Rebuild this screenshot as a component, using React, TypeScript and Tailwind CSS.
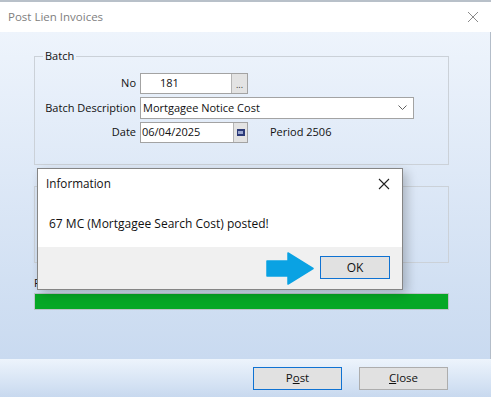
import React from 'react';

const Field = ({ children, className = '' }: { children: React.ReactNode; className?: string }) => (
    <div className={`flex items-center bg-white border border-[#a3a3a3] ${className}`}>{children}</div>
);

export default function App() {
    return (
        <div className="relative w-[491px] h-[397px] flex flex-col overflow-hidden bg-white border-t-2 border-[#b8c0c9] font-['Open_Sans',sans-serif] text-[11px] text-[#111]">
            {/* Title bar */}
            <div className="h-[30px] shrink-0 flex items-center justify-between pl-[8px] pr-[12px]">
                <span className="text-[11.5px] text-[#808080]">Post Lien Invoices</span>
                <svg width="12" height="12" viewBox="0 0 12 12" className="text-[#8a8a8a]">
                    <path d="M1 1 L11 11 M11 1 L1 11" stroke="currentColor" strokeWidth="1" />
                </svg>
            </div>

            {/* Body */}
            <div className="flex-1 flex flex-col pl-[34px] pr-[41px] pt-[16px] bg-gradient-to-b from-[#eef4fc] to-[#c9daf0] border-r border-[#b3bdc9]">
                <fieldset className="border border-[#cbd1d8] h-[117px] p-0 m-0">
                    <legend className="ml-[8px] px-[2px] leading-[16px]">Batch</legend>
                    <div className="grid grid-cols-[101px_auto] gap-x-[4px] gap-y-[3px] mt-[9px] items-center">
                        <span className="text-right">No</span>
                        <Field className="w-[108px] h-[21px] justify-between">
                            <span className="pl-[19px]">181</span>
                            <span className="w-[16px] h-[19px] bg-[#e3e3e3] border-l border-[#b5b5b5] flex items-end justify-center pb-[4px] text-[9px] leading-none text-[#333]">...</span>
                        </Field>
                        <span className="text-right">Batch Description</span>
                        <Field className="w-[274px] h-[22px] justify-between">
                            <span className="pl-[2px]">Mortgagee Notice Cost</span>
                            <svg width="9" height="6" viewBox="0 0 9 6" className="mr-[6px] text-[#606060]">
                                <path d="M0.5 0.5 L4.5 4.5 L8.5 0.5" fill="none" stroke="currentColor" strokeWidth="1" />
                            </svg>
                        </Field>
                        <span className="text-right">Date</span>
                        <div className="flex items-center">
                            <Field className="w-[108px] h-[21px] justify-between">
                                <span className="pl-[1px]">06/04/2025</span>
                                <span className="w-[14px] h-[19px] bg-[#e3e3e3] border-l border-[#b5b5b5] flex items-center justify-center">
                                    <span className="w-[8px] h-[7px] bg-[#2b3a78] flex items-center justify-center">
                                        <span className="w-[5px] h-[3px] bg-[#9aa6cf]" />
                                    </span>
                                </span>
                            </Field>
                            <span className="ml-[22px]">Period 2506</span>
                        </div>
                    </div>
                </fieldset>

                <div className="mt-[21px] h-[77px] border border-[#cbd1d8]" />

                <span className="mt-[12px] leading-[16px]">Progress</span>
                <div className="mt-[2px] h-[17px] border border-[#bcc3cb] bg-[#06a826]" />
            </div>

            {/* Bottom bar */}
            <div className="h-[38px] shrink-0 flex items-center justify-end gap-[17px] pr-[43px] bg-gradient-to-b from-[#edf4fc] to-[#c8d9ef]">
                <button className="w-[89px] h-[23px] bg-[#e1e1e1] border border-[#0f72d2] text-[11.5px]">
                    P<span className="underline">o</span>st
                </button>
                <button className="w-[89px] h-[23px] bg-[#e1e1e1] border border-[#adadad] text-[11.5px]">
                    <span className="underline">C</span>lose
                </button>
            </div>

            {/* Information dialog */}
            <div className="absolute left-[37px] top-[166px] w-[366px] h-[122px] flex flex-col bg-white border border-[#858585] shadow-[4px_4px_10px_rgba(0,0,0,0.22)]">
                <div className="h-[30px] flex items-center justify-between pl-[8px] pr-[12px]">
                    <span className="text-[11.7px]">Information</span>
                    <svg width="12" height="12" viewBox="0 0 12 12" className="text-[#222]">
                        <path d="M1 1 L11 11 M11 1 L1 11" stroke="currentColor" strokeWidth="1.1" />
                    </svg>
                </div>
                <div className="flex-1 pl-[11px] pt-[16px] text-[12px]">67 MC (Mortgagee Search Cost) posted!</div>
                <div className="h-[42px] flex justify-end pt-[9px] pr-[12px] bg-[#f0f0f0]">
                    <button className="w-[70px] h-[23px] bg-[#e1e1e1] border border-[#0f72d2] text-[12px]">OK</button>
                </div>
            </div>

            {/* Annotation arrow */}
            <svg className="absolute left-[266px] top-[250px]" width="48" height="33" viewBox="0 0 48 33">
                <path d="M1 9 H22 V1 L47 16.5 L22 32 V24 H1 Z" fill="#0aa2e3" stroke="#0aa2e3" strokeWidth="1.5" strokeLinejoin="round" />
            </svg>
        </div>
    );
}
